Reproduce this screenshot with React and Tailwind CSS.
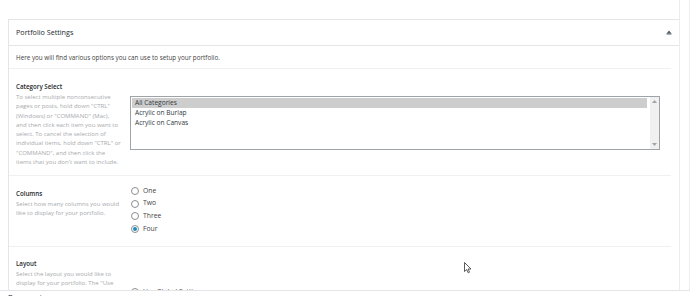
const CATEGORIES = ['All Categories', 'Acrylic on Burlap', 'Acrylic on Canvas'];
const COLUMNS = ['One', 'Two', 'Three', 'Four'];

const CATEGORY_DESC = [
  'To select multiple nonconsecutive',
  'pages or posts, hold down "CTRL"',
  '(Windows) or "COMMAND" (Mac),',
  'and then click each item you want to',
  'select. To cancel the selection of',
  'individual items, hold down "CTRL" or',
  '"COMMAND", and then click the',
  "items that you don't want to include.",
];

function Radio({ label, checked }) {
  return (
    <label className="flex items-center gap-[4px] h-[12.8px]">
      <span className="w-[8px] h-[8px] rounded-full border border-[#8c8f94] bg-white flex items-center justify-center shrink-0">
        {checked && <span className="w-[4px] h-[4px] rounded-full bg-[#1e8cbe]" />}
      </span>
      <span className="text-[6.8px] text-[#444]">{label}</span>
    </label>
  );
}

function Label({ title, lines }) {
  return (
    <>
      <h3 className="text-[6.2px] leading-[9px] font-semibold text-[#23282d]">{title}</h3>
      <div className="text-[6px] leading-[9.3px] text-[#a7aaad] mt-[2px]">
        {lines.map((l) => (
          <p key={l} className="whitespace-nowrap">{l}</p>
        ))}
      </div>
    </>
  );
}

export default function App() {
  return (
    <div className="w-[690px] h-[296px] overflow-hidden bg-white flex flex-col" style={{ fontFamily: '"Open Sans", "Noto Sans", sans-serif' }}>
      <div className="h-[290px] shrink-0 overflow-hidden flex">
        <div className="w-[8px] shrink-0" />
        <div className="w-[672px] shrink-0 flex flex-col border-r border-[#ececec]">
          <div className="h-[19px] shrink-0" />
          <div className="flex-1 border-l border-t border-[#e5e5e5]">
            {/* Header */}
            <div className="h-[26px] border-b border-[#e5e5e5] flex items-center justify-between pl-[7px] pr-[8px]">
              <h2 className="text-[7.2px] text-[#23282d]">Portfolio Settings</h2>
              <svg width="6" height="5" viewBox="0 0 6 5" className="mr-[-1px]">
                <path d="M3 0.5 L5.5 3.5 L0.5 3.5 Z" fill="#555d66" />
                <rect x="0.5" y="3.5" width="5" height="1" fill="#555d66" />
              </svg>
            </div>

            <p className="pl-[7px] pt-[7px] h-[22px] text-[6.3px] text-[#444]">
              Here you will find various options you can use to setup your portfolio.
            </p>

            <div className="mr-[8px] flex flex-col">
              {/* Category select */}
              <div className="flex border-t border-[#f0f0f0] pt-[13px] pb-[8px]">
                <div className="w-[113px] pl-[7px] shrink-0">
                  <Label title="Category Select" lines={CATEGORY_DESC} />
                </div>
                <div className="flex-1 pl-[8px] pr-[11px]">
                  <div className="mt-[14px] h-[54px] border border-[#9ea3a8] flex">
                    <div className="flex-1 pl-[1px] pt-[1px]">
                      {CATEGORIES.map((c, i) => (
                        <div
                          key={c}
                          className={`h-[10px] pl-[3px] text-[6.6px] leading-[10px] text-[#32373c] ${i === 0 ? 'bg-[#cdcdcd]' : ''}`}
                        >
                          {c}
                        </div>
                      ))}
                    </div>
                    <div className="w-[9px] bg-[#f0f0f0] flex flex-col items-center justify-between py-[3px] ml-[3px]">
                      <svg width="5" height="3" viewBox="0 0 5 3"><path d="M2.5 0 L5 3 L0 3 Z" fill="#a3a3a3" /></svg>
                      <svg width="5" height="3" viewBox="0 0 5 3"><path d="M0 0 L5 0 L2.5 3 Z" fill="#a3a3a3" /></svg>
                    </div>
                  </div>
                </div>
              </div>

              {/* Columns */}
              <div className="flex border-t border-[#f0f0f0] pt-[8px] pb-[10px]">
                <div className="w-[113px] pl-[7px] shrink-0 pt-[4.5px]">
                  <Label
                    title="Columns"
                    lines={['Select how many columns you would', 'like to display for your portfolio.']}
                  />
                </div>
                <div className="flex-1 pl-[9px] flex flex-col">
                  {COLUMNS.map((c) => (
                    <Radio key={c} label={c} checked={c === 'Four'} />
                  ))}
                </div>
              </div>

              {/* Layout */}
              <div className="flex border-t border-[#f0f0f0] pt-[12px]">
                <div className="w-[113px] pl-[7px] shrink-0">
                  <Label
                    title="Layout"
                    lines={['Select the layout you would like to', 'display for your portfolio. The "Use']}
                  />
                </div>
                <div className="flex-1 pl-[9px] pt-[27px] flex flex-col">
                  <Radio label="Use Global Setting" checked={false} />
                </div>
              </div>
            </div>
          </div>
        </div>
        <div className="w-[10px] shrink-0 border-r border-[#eeeeee]" />
      </div>

      {/* Bottom bar */}
      <div className="flex-1 border-t border-[#e2e4e7] pl-[8px] pt-[2px]">
        <span className="text-[7px] leading-[9px] text-[#23282d] block">Document</span>
      </div>

      {/* Mouse pointer */}
      <svg className="absolute left-[464px] top-[262px]" width="8" height="12" viewBox="0 0 8 12">
        <path d="M0.5 0.5 L0.5 9.5 L2.7 7.5 L4.2 10.8 L5.5 10.2 L4.1 7 L7 7 Z" fill="#fff" stroke="#333" strokeWidth="0.8" strokeLinejoin="round" />
      </svg>
    </div>
  );
}
